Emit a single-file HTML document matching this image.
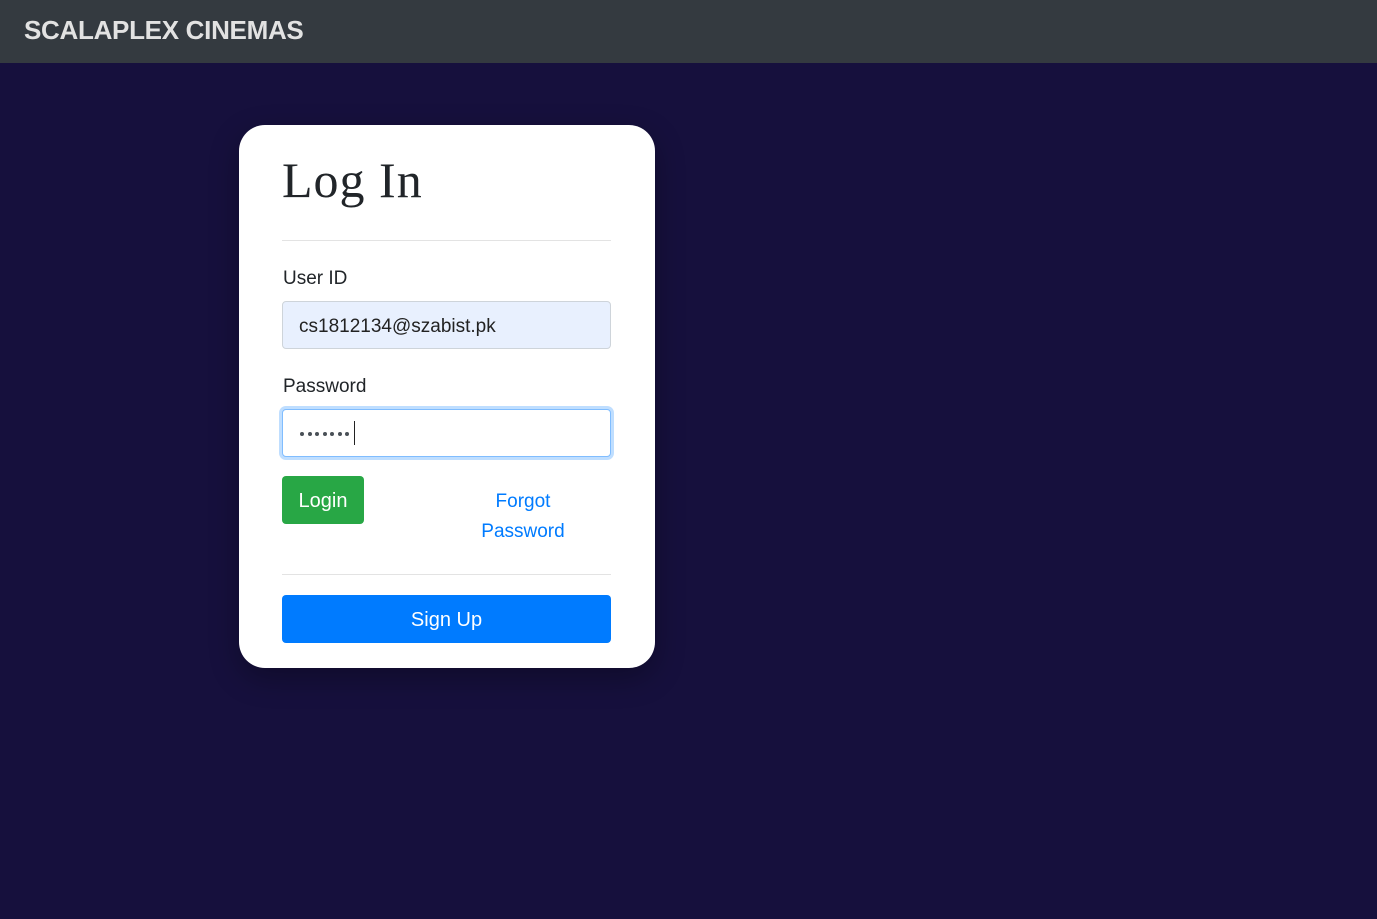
<!DOCTYPE html>
<html><head><meta charset="utf-8"><style>
*{box-sizing:border-box;margin:0;padding:0}
body{width:1377px;height:919px;background:#16103d;font-family:"Liberation Sans",sans-serif;position:relative;overflow:hidden}
.nav{position:absolute;left:0;top:0;width:1377px;height:63px;background:#343a40}
.brand{position:absolute;left:24px;top:15px;color:#e2e2e2;font-weight:bold;font-size:26px;letter-spacing:-0.3px}
.card{position:absolute;left:239px;top:125px;width:416px;height:543px;background:#fff;border-radius:26px;box-shadow:0 10px 30px rgba(0,0,0,.3)}
.abs{position:absolute}
h1{position:absolute;left:43px;top:26px;font-family:"Liberation Serif",serif;font-weight:normal;font-size:50px;color:#212529;letter-spacing:1px}
.hr{position:absolute;left:43px;width:329px;height:1px;background:#e3e3e3}
.lbl{position:absolute;left:44px;font-size:19px;color:#212529}
.inp{position:absolute;left:43px;width:329px;height:48px;border:1px solid #ced4da;border-radius:4px;font-size:19px;color:#222;padding:14px 16px 0}
.d{position:absolute;top:22px;width:4px;height:4px;border-radius:50%;background:#495057}
</style></head><body>
<div class="nav"><div class="brand">SCALAPLEX CINEMAS</div></div>
<div class="card">
<h1>Log In</h1>
<div class="hr" style="top:115px"></div>
<div class="lbl" style="top:143px">User ID</div>
<div class="inp" style="top:176px;background:#e8f0fe">cs1812134@szabist.pk</div>
<div class="lbl" style="top:251px">Password</div>
<div class="inp" style="top:284px;background:#fff;border-color:#80bdff;box-shadow:0 0 0 3px rgba(0,123,255,.25)">
<span class="d" style="left:17px"></span><span class="d" style="left:24.5px"></span><span class="d" style="left:32px"></span><span class="d" style="left:39.5px"></span><span class="d" style="left:47px"></span><span class="d" style="left:54.5px"></span><span class="d" style="left:62px"></span>
<span class="abs" style="left:71px;top:11px;width:1px;height:24px;background:#222"></span></div>
<div class="abs" style="left:43px;top:351px;width:82px;height:48px;background:#28a745;border-radius:4px;color:#fff;font-size:20px;text-align:center;line-height:50px">Login</div>
<div class="abs" style="left:224px;top:362px;width:120px;text-align:center;color:#007bff;font-size:19px;line-height:30px">Forgot<br>Password</div>
<div class="hr" style="top:449px"></div>
<div class="abs" style="left:43px;top:470px;width:329px;height:48px;background:#007bff;border-radius:4px;color:#fff;font-size:20px;text-align:center;line-height:51px">Sign Up</div>
</div>
</body></html>
